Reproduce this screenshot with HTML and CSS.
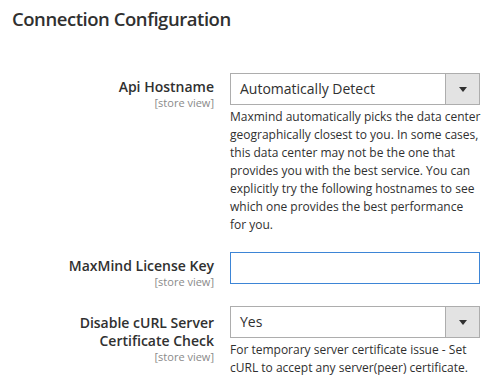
FILE: index.html
```html
<!DOCTYPE html>
<html lang="en">
<head>
    <meta charset="UTF-8">
    <meta name="viewport" content="width=device-width, initial-scale=1.0">
    <title>Connection Configuration</title>
    <link rel="stylesheet" href="styles.css">
</head>
<body>
    <div class="section">
        <h2 class="section-title">Connection Configuration</h2>

        <div class="field">
            <div class="field-label">
                <label for="api_hostname">Api Hostname</label>
                <span class="scope">[store view]</span>
            </div>
            <div class="field-control">
                <div class="select">
                    <span class="select-value">Automatically Detect</span>
                    <span class="select-btn"><span class="arrow"></span></span>
                </div>
                <p class="note">Maxmind automatically picks the data center<br>
                    geographically closest to you. In some cases,<br>
                    this data center may not be the one that<br>
                    provides you with the best service. You can<br>
                    explicitly try the following hostnames to see<br>
                    which one provides the best performance<br>
                    for you.</p>
            </div>
        </div>

        <div class="field">
            <div class="field-label">
                <label for="license_key">MaxMind License Key</label>
                <span class="scope">[store view]</span>
            </div>
            <div class="field-control">
                <input type="text" id="license_key" class="input-text">
            </div>
        </div>

        <div class="field">
            <div class="field-label multi">
                <label for="disable_curl">Disable cURL Server Certificate Check</label>
                <span class="scope">[store view]</span>
            </div>
            <div class="field-control">
                <div class="select">
                    <span class="select-value">Yes</span>
                    <span class="select-btn"><span class="arrow"></span></span>
                </div>
                <p class="note">For temporary server certificate issue - Set cURL to accept any server(peer) certificate.</p>
            </div>
        </div>
    </div>
</body>
</html>
```

FILE: styles.css
```css
body {
    margin: 0;
    background: #fff;
    color: #303030;
    font-family: "Open Sans", "Liberation Sans", sans-serif;
}
.section {
    padding: 0 12px;
}
.section-title {
    margin: 0;
    padding-top: 6px;
    font-size: 18.5px;
    font-weight: 600;
    letter-spacing: -0.45px;
    line-height: 26px;
    height: 67px;
}
.field {
    display: grid;
    grid-template-columns: 202px 250px;
    column-gap: 16px;
    margin-bottom: 18px;
}
.field-label {
    display: flex;
    flex-direction: column;
    align-items: flex-end;
    text-align: right;
    padding-top: 5px;
}
.field-label.multi {
    padding-top: 8px;
}
.field-label label {
    font-size: 14px;
    font-weight: 600;
    line-height: 18px;
    padding-bottom: 1px;
}
.scope {
    font-size: 11px;
    line-height: 12px;
    color: #8a8a8a;
}
.select {
    display: flex;
    height: 32px;
    box-sizing: border-box;
    border: 1px solid #adadad;
    background: #fff;
}
.select-value {
    flex: 1;
    padding-left: 9px;
    font-size: 14px;
    line-height: 30px;
}
.select-btn {
    width: 33px;
    background: #e3e3e3;
    border-left: 1px solid #adadad;
    display: flex;
    align-items: center;
    justify-content: center;
}
.arrow {
    width: 0;
    height: 0;
    border-left: 4px solid transparent;
    border-right: 4px solid transparent;
    border-top: 5px solid #303030;
}
.input-text {
    display: block;
    width: 250px;
    height: 32px;
    box-sizing: border-box;
    margin: 0;
    border: 1px solid #3d85d6;
    border-radius: 0;
    outline: none;
}
.note {
    width: 262px;
    margin: 3px 0 0;
    font-size: 12px;
    line-height: 18px;
}
```
